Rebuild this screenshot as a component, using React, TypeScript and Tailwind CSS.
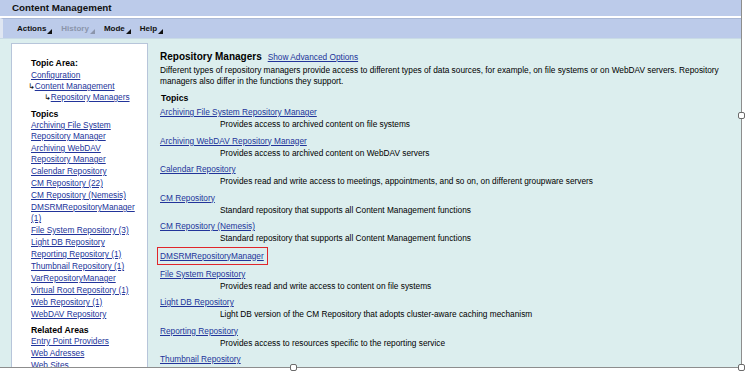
import React from 'react';

// ─── Data ─────────────────────────────────────────────────────────────────────

const sideTopics = [
  'Archiving File System Repository Manager',
  'Archiving WebDAV Repository Manager',
  'Calendar Repository',
  'CM Repository (22)',
  'CM Repository (Nemesis)',
  'DMSRMRepositoryManager (1)',
  'File System Repository (3)',
  'Light DB Repository',
  'Reporting Repository (1)',
  'Thumbnail Repository (1)',
  'VarRepositoryManager',
  'Virtual Root Repository (1)',
  'Web Repository (1)',
  'WebDAV Repository',
];

const related = ['Entry Point Providers', 'Web Adresses', 'Web Sites'];

const topics: { name: string; desc?: string; marked?: boolean }[] = [
  { name: 'Archiving File System Repository Manager', desc: 'Provides access to archived content on file systems' },
  { name: 'Archiving WebDAV Repository Manager', desc: 'Provides access to archived content on WebDAV servers' },
  { name: 'Calendar Repository', desc: 'Provides read and write access to meetings, appointments, and so on, on different groupware servers' },
  { name: 'CM Repository', desc: 'Standard repository that supports all Content Management functions' },
  { name: 'CM Repository (Nemesis)', desc: 'Standard repository that supports all Content Management functions' },
  { name: 'DMSRMRepositoryManager', marked: true },
  { name: 'File System Repository', desc: 'Provides read and write access to content on file systems' },
  { name: 'Light DB Repository', desc: 'Light DB version of the CM Repository that adopts cluster-aware caching mechanism' },
  { name: 'Reporting Repository', desc: 'Provides access to resources specific to the reporting service' },
  { name: 'Thumbnail Repository' },
];

const link = 'text-[#22349a] underline underline-offset-[1px]';

// ─── Pieces ───────────────────────────────────────────────────────────────────

function MenuItem({ label, disabled }: { label: string; disabled?: boolean }) {
  return (
    <div className={`flex items-end font-bold ${disabled ? 'text-[#8b95ab]' : 'text-[#111]'}`}>
      <span>{label}</span>
      <svg width="5" height="5" viewBox="0 0 5 5" className="mb-[1px] ml-[1px]">
        <path d="M5 0 L5 5 L0 5 Z" fill={disabled ? '#8b95ab' : '#111'} />
      </svg>
    </div>
  );
}

function Handle({ className }: { className: string }) {
  return (
    <div className={`absolute w-[7px] h-[7px] rounded-[2px] bg-white border border-[#6b6b6b] ${className}`} />
  );
}

// ─── Page ─────────────────────────────────────────────────────────────────────

export default function App() {
  return (
    <div className="relative w-[750px] h-[372px] bg-white overflow-hidden font-['Liberation_Sans','DejaVu_Sans',Arial,sans-serif] text-[8.3px] text-black">
      <div className="w-[742px] h-[368px] border-r border-b border-[#8d8d8d] flex flex-col">
        {/* title bar */}
        <div className="h-[16px] bg-[#bccbea] pl-[12px] flex items-center">
          <span className="text-[9.8px] font-bold text-[#111]">Content Management</span>
        </div>
        <div className="h-[2px] bg-white" />

        {/* menu */}
        <div className="h-[20px] bg-[#bccbea] border-t border-[#a9b8d6] border-l-[3px] border-l-[#dfe6f2] pl-[14px] flex items-center gap-[9px] text-[8px]">
          <MenuItem label="Actions" />
          <MenuItem label="History" disabled />
          <MenuItem label="Mode" />
          <MenuItem label="Help" />
        </div>

        {/* content */}
        <div className="flex-1 min-h-0 bg-[#dceeee] border-t border-[#c9dbe6] flex overflow-hidden">
          {/* left nav */}
          <div className="ml-[11px] mt-[4px] w-[137px] shrink-0 bg-white border border-b-0 border-[#b7c5da] pt-[13px] pl-[19px] pr-[10px]">
            <div className="text-[8.7px] font-bold leading-[12px]">Topic Area:</div>
            <div className="leading-[11px]">
              <div className="leading-[12px]"><span className={link}>Configuration</span></div>
              <div className="-ml-[3px]">
                <span className="text-[8px]">↳</span>
                <span className={link}>Content Management</span>
              </div>
              <div className="ml-[13px]">
                <span className="text-[8px]">↳</span>
                <span className={link}>Repository Managers</span>
              </div>
            </div>

            <div className="mt-[5px] text-[8.7px] font-bold leading-[12px]">Topics</div>
            <div className="flex flex-col gap-[1px] leading-[11px]">
              {sideTopics.map((t) => (
                <div key={t}>
                  <span className={link}>{t}</span>
                </div>
              ))}
            </div>

            <div className="mt-[4px] text-[8.7px] font-bold leading-[12px]">Related Areas</div>
            <div className="flex flex-col gap-[1px] leading-[11px]">
              {related.map((t) => (
                <div key={t}>
                  <span className={link}>{t}</span>
                </div>
              ))}
            </div>
          </div>

          {/* main */}
          <div className="pl-[12px] pt-[11px] w-[580px]">
            <div className="flex items-baseline gap-[6px] leading-[13px]">
              <span className="text-[10px] font-bold">Repository Managers</span>
              <span className={link}>Show Advanced Options</span>
            </div>
            <p className="mt-[1px] leading-[11px]">
              Different types of repository managers provide access to different types of data sources, for example, on file systems or on WebDAV servers. Repository managers also differ in the functions they support.
            </p>

            <div className="mt-[5px] pl-[1px] text-[8.7px] font-bold leading-[12px]">Topics</div>
            <div className="mt-[2px] flex flex-col">
              {topics.map((t) =>
                t.marked ? (
                  <div key={t.name} className="-mt-[2px] mb-[3px] -ml-[3px] self-start border border-[#e0262b] pl-[2px] pr-[3px] py-[2px] leading-[12px]">
                    <span className={link}>{t.name}</span>
                  </div>
                ) : (
                  <div key={t.name} className="mb-[4.5px]">
                    <div className="leading-[12px]">
                      <span className={link}>{t.name}</span>
                    </div>
                    {t.desc && <div className="pl-[60px] leading-[12px]">{t.desc}</div>}
                  </div>
                ),
              )}
            </div>
          </div>
        </div>
      </div>

      {/* selection handles */}
      <Handle className="left-[738px] top-[112px]" />
      <Handle className="left-[290px] top-[364px]" />
      <Handle className="left-[738px] top-[364px]" />
    </div>
  );
}
